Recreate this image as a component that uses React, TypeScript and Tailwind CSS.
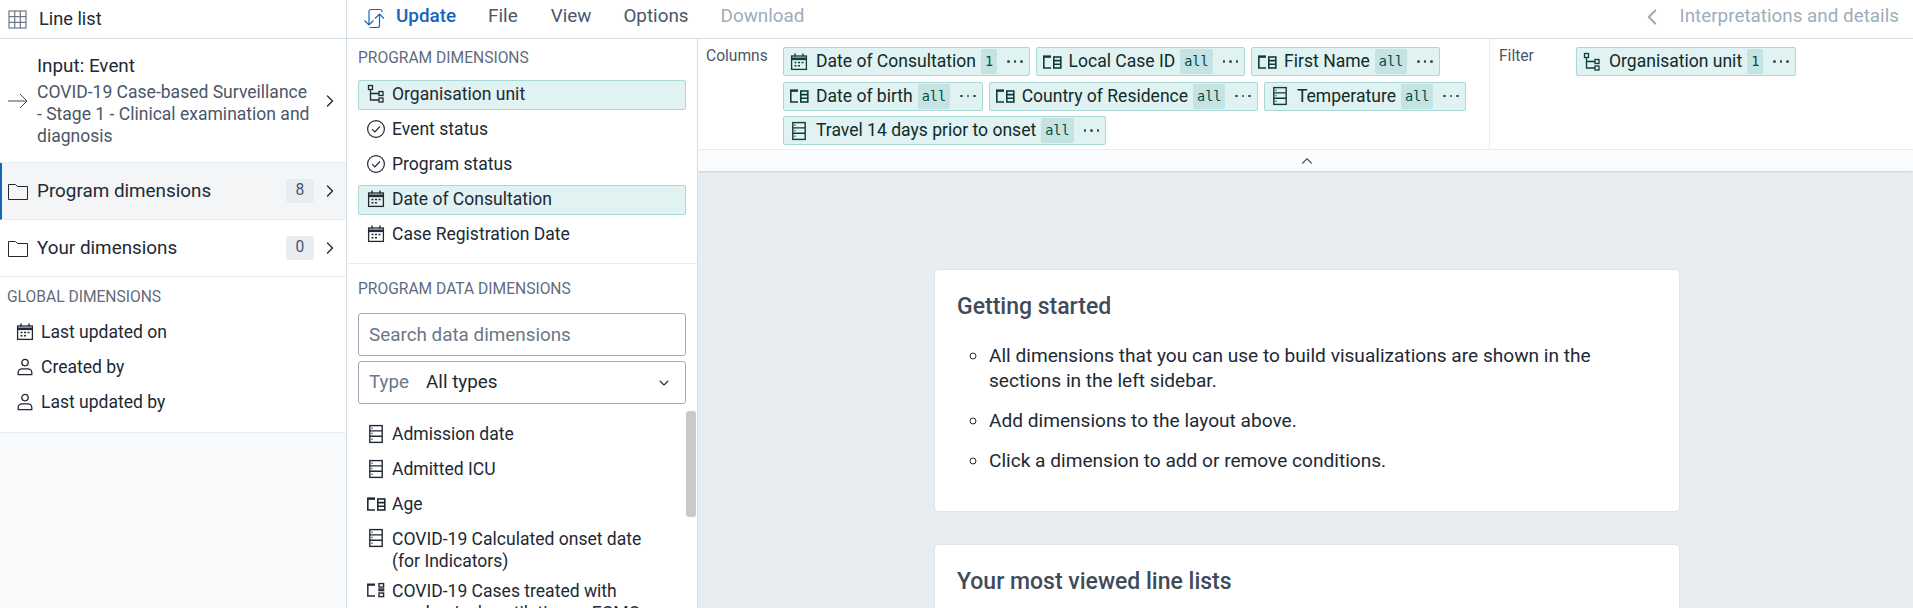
import React from 'react';
import { ChevronDown, ChevronLeft, ChevronRight, ChevronUp } from 'lucide-react';

type IconKind = 'org' | 'check' | 'calendar' | 'data' | 'attr' | 'indicator' | 'user';

const DimIcon = ({ kind, color = '#212934' }: { kind: IconKind; color?: string }) => {
  const common = { fill: 'none', stroke: color, strokeWidth: 1 };
  if (kind === 'org')
    return (
      <svg width="20" height="20" viewBox="0 0 20 20" {...common} strokeWidth={1.3}>
        <rect x="2.5" y="1.5" width="4" height="4" />
        <rect x="13" y="7.5" width="4" height="4" />
        <rect x="13" y="14" width="4" height="4" />
        <path d="M4.5 5.5V16H13M4.5 9.5H13" />
      </svg>
    );
  if (kind === 'check')
    return (
      <svg width="20" height="20" viewBox="0 0 20 20" {...common} strokeWidth={1.2}>
        <circle cx="10" cy="10" r="8.4" />
        <path d="M6 10.2l2.8 2.8L14 7.5" />
      </svg>
    );
  if (kind === 'calendar')
    return (
      <svg width="20" height="20" viewBox="0 0 20 20" {...common} strokeWidth={1.3}>
        <rect x="2.6" y="4" width="14.8" height="13.4" />
        <path d="M2.6 6.8h14.8" strokeWidth={2.6} />
        <path d="M6 1.6v3M14 1.6v3" strokeWidth={1.4} />
        <path d="M5.5 10.5h2M9 10.5h2M12.5 10.5h2M5.5 13.8h2M9 13.8h2" strokeWidth={1.6} />
      </svg>
    );
  if (kind === 'data')
    return (
      <svg width="20" height="20" viewBox="0 0 20 20" {...common} strokeWidth={1.4}>
        <rect x="3.8" y="1.6" width="12.4" height="16.8" />
        <path d="M3.8 6.9h12.4M3.8 12.2h12.4" />
        <path d="M5.5 4.3h1M5.5 9.5h1M5.5 15.3h1" />
      </svg>
    );
  if (kind === 'attr')
    return (
      <svg width="20" height="20" viewBox="0 0 20 20" {...common} strokeWidth={1.6}>
        <path d="M9 16H1.8V4.6H9" />
        <path d="M1 4.6h8" strokeWidth={2.2} />
        <rect x="11.8" y="5" width="7" height="11" />
        <path d="M11.8 8.6h7M11.8 12.3h7" />
      </svg>
    );
  if (kind === 'indicator')
    return (
      <svg width="20" height="20" viewBox="0 0 20 20" {...common} strokeWidth={1.4}>
        <path d="M9 16H1.8V4.6H9" />
        <path d="M1 4.6h8" strokeWidth={2.2} />
        <rect x="13" y="3.6" width="4.6" height="3.4" />
        <rect x="13" y="9" width="4.6" height="1.6" />
        <rect x="13" y="13" width="4.6" height="3.6" />
      </svg>
    );
  return (
    <svg width="20" height="20" viewBox="0 0 20 20" {...common} strokeWidth={1.3}>
      <circle cx="10" cy="5.6" r="3.2" />
      <path d="M3.2 17.6v-2.2c0-2.2 2-3.6 3.8-3.6h6c1.8 0 3.8 1.4 3.8 3.6v2.2z" />
    </svg>
  );
};

const FolderIcon = () => (
  <svg width="20" height="17" viewBox="0 0 20 17" fill="none" stroke="#212934" strokeWidth="1" className="shrink-0">
    <path d="M.5 1.5h7l2 2h10v13H.5z" />
  </svg>
);

const Chip = ({ kind, label, badge }: { kind: IconKind; label: string; badge: string }) => (
  <div className="flex h-[29px] items-center rounded-[2px] border border-[#a8d9d6] bg-[#e0f2f1] pl-[5px] pr-[6px] text-[17.55px] text-[#0f2b2a]">
    <span className="flex w-[20px] shrink-0 justify-center">
      <DimIcon kind={kind} color="#0f3d39" />
    </span>
    <span className="ml-[7px] whitespace-nowrap">{label}</span>
    <span className="ml-[5px] flex h-[25px] items-center rounded-[2px] bg-[#c5e3e2] px-[4px] font-['DejaVu_Sans_Mono',monospace] text-[13.5px] text-[#004d40]">
      {badge}
    </span>
    <span className="ml-[10px] flex gap-[4px]">
      <i className="h-[2.5px] w-[2.5px] rounded-full bg-[#33524f]" />
      <i className="h-[2.5px] w-[2.5px] rounded-full bg-[#33524f]" />
      <i className="h-[2.5px] w-[2.5px] rounded-full bg-[#33524f]" />
    </span>
  </div>
);

const PanelRow = ({ kind, label, selected }: { kind: IconKind; label: string; selected?: boolean }) => (
  <div
    className={`flex h-[30px] items-center rounded-[2px] border pb-[2px] pl-[7px] text-[17.55px] text-[#212934] ${
      selected ? 'border-[#a8d9d6] bg-[#e0f2f1]' : 'border-transparent'
    }`}
  >
    <span className="flex w-[20px] shrink-0 justify-center">
      <DimIcon kind={kind} />
    </span>
    <span className="ml-[6px]">{label}</span>
  </div>
);

const SideRow = ({ label, count, active }: { label: string; count: number; active?: boolean }) => (
  <div
    className={`flex h-[57px] items-center border-b border-[#e8edf2] pr-[6px] ${
      active ? 'border-l-2 border-l-[#1565c0] bg-[#f3f5f7] pl-[6px]' : 'pl-[8px]'
    }`}
  >
    <FolderIcon />
    <span className="ml-[9px] flex-1 pt-[1px] text-[18.85px] text-[#212934]">{label}</span>
    <span className="flex h-[24px] w-[28px] items-center justify-center rounded-[3px] bg-[#e8edf2] text-[15.6px] text-[#4a5768]">
      {count}
    </span>
    <ChevronRight size={20} strokeWidth={1.6} className="ml-[6px] text-[#212934]" />
  </div>
);

export default function App() {
  return (
    <div className="flex h-[608px] flex-col overflow-hidden bg-white font-['Roboto',sans-serif]">
      <header className="flex h-[39px] shrink-0 border-b border-[#d5dde5]">
        <div className="flex w-[347px] shrink-0 items-center border-r border-[#d5dde5] pl-[8px]">
          <svg width="19" height="19" viewBox="0 0 19 19" fill="none" stroke="#6c7787" strokeWidth="1.2">
            <rect x="1" y="1" width="17" height="17" />
            <path d="M1 6.7h17M1 12.3h17M6.7 1v17M12.3 1v17" />
          </svg>
          <span className="ml-[12px] text-[18.2px] text-[#212934]">Line list</span>
        </div>
        <nav className="flex flex-1 items-center pb-[5px] text-[18.85px] text-[#4a5768]">
          <svg className="ml-[16px] mt-[3px]" width="23" height="21" viewBox="0 0 23 21" fill="none" stroke="#1565c0" strokeWidth="1.2">
            <path d="M6 12V3.5a2 2 0 0 1 2-2h9a2 2 0 0 1 2 2V4M1.5 12.5L6 17l4.5-4.5M6 17V6" />
            <path d="M16.5 7v10.5a2 2 0 0 1-2 2H6.5M12 10.5L16.5 6l4.5 4.5" />
          </svg>
          <span className="ml-[10px] font-medium text-[#1565c0]">Update</span>
          <span className="ml-[32px]">File</span>
          <span className="ml-[33px]">View</span>
          <span className="ml-[32px]">Options</span>
          <span className="ml-[32px] text-[#a0adba]">Download</span>
          <ChevronLeft size={26} strokeWidth={2} className="ml-auto text-[#a0adba]" />
          <span className="ml-[15px] mr-[14px] text-[#a0adba]">Interpretations and details</span>
        </nav>
      </header>

      <div className="flex min-h-0 flex-1">
        <aside className="flex w-[347px] shrink-0 flex-col border-r border-[#d5dde5] bg-[#f8f9fa]">
          <div className="bg-white">
            <div className="flex h-[124px] items-center border-b border-[#e8edf2] pl-[8px] pr-[6px]">
              <svg width="20" height="18" viewBox="0 0 20 18" fill="none" stroke="#404b5a" strokeWidth="1" className="shrink-0">
                <path d="M0 9h19M12 2l7 7-7 7" />
              </svg>
              <div className="ml-[9px] flex-1">
                <div className="mb-[4px] text-[18.85px] leading-[22px] text-[#212934]">Input: Event</div>
                <div className="text-[17.55px] leading-[22px] text-[#4a5768]">
                  COVID-19 Case-based Surveillance - Stage 1 - Clinical examination and diagnosis
                </div>
              </div>
              <ChevronRight size={20} strokeWidth={1.6} className="ml-[6px] shrink-0 text-[#212934]" />
            </div>
            <SideRow label="Program dimensions" count={8} active />
            <SideRow label="Your dimensions" count={0} />
            <div className="border-b border-[#e8edf2] pb-[14px]">
              <div className="px-[7px] pb-[13px] pt-[12px] text-[15.6px] uppercase leading-[16px] text-[#5f6c7c]">
                Global dimensions
              </div>
              <div className="flex flex-col gap-[5px] pl-[7px]">
                <PanelRow kind="calendar" label="Last updated on" />
                <PanelRow kind="user" label="Created by" />
                <PanelRow kind="user" label="Last updated by" />
              </div>
            </div>
          </div>
        </aside>

        <section className="relative w-[351px] shrink-0 overflow-hidden border-r border-[#d5dde5]">
          <div className="border-b border-[#e8edf2] px-[11px] pb-[13px]">
            <div className="pb-[13px] pt-[10px] text-[15.6px] uppercase leading-[18px] text-[#5f6c7c]">Program dimensions</div>
            <div className="flex flex-col gap-[5px]">
              <PanelRow kind="org" label="Organisation unit" selected />
              <PanelRow kind="check" label="Event status" />
              <PanelRow kind="check" label="Program status" />
              <PanelRow kind="calendar" label="Date of Consultation" selected />
              <PanelRow kind="calendar" label="Case Registration Date" />
            </div>
          </div>
          <div className="px-[11px]">
            <div className="pb-[15px] pt-[16px] text-[15.6px] uppercase leading-[18px] text-[#5f6c7c]">Program data dimensions</div>
            <input
              className="h-[43px] w-full rounded-[3px] border border-[#a0adba] px-[10px] text-[18.85px] placeholder:text-[#6c7787]"
              placeholder="Search data dimensions"
            />
            <div className="mt-[5px] flex h-[43px] items-center rounded-[3px] border border-[#a0adba] pl-[10px] pr-[13px] text-[18.85px]">
              <span className="text-[#6c7787]">Type</span>
              <span className="ml-[17px] flex-1 text-[#212934]">All types</span>
              <ChevronDown size={16} strokeWidth={1.6} className="text-[#212934]" />
            </div>
            <div className="mt-[16px] flex flex-col gap-[5px] pr-[11px]">
              <PanelRow kind="data" label="Admission date" />
              <PanelRow kind="data" label="Admitted ICU" />
              <PanelRow kind="attr" label="Age" />
              <div className="mt-[3px] flex items-start pl-[8px] text-[17.55px] leading-[22px] text-[#212934]">
                <span className="flex w-[20px] shrink-0 justify-center"><DimIcon kind="data" /></span>
                <span className="ml-[6px]">COVID-19 Calculated onset date<br />(for Indicators)</span>
              </div>
              <div className="mt-[3px] flex items-start pl-[8px] text-[17.55px] leading-[22px] text-[#212934]">
                <span className="flex w-[20px] shrink-0 justify-center"><DimIcon kind="indicator" /></span>
                <span className="ml-[6px]">COVID-19 Cases treated with<br />mechanical ventilation or ECMO</span>
              </div>
            </div>
          </div>
          {/* scrollbar thumb */}
          <div className="absolute right-[1px] top-[372px] h-[106px] w-[10px] rounded-[3px] bg-[#c9c9c9]" />
        </section>

        <main className="flex min-w-0 flex-1 flex-col bg-[#e8edf2]">
          <div className="flex h-[111px] shrink-0 border-b border-[#e8edf2] bg-white">
            <div className="flex w-[792px] shrink-0 border-r border-[#e8edf2]">
              <div className="w-[85px] shrink-0 pl-[8px] pt-[6px] text-[15.6px] text-[#4a5768]">Columns</div>
              <div className="flex flex-wrap content-start gap-x-[6px] gap-y-[5.5px] pt-[8px]">
                <Chip kind="calendar" label="Date of Consultation" badge="1" />
                <Chip kind="attr" label="Local Case ID" badge="all" />
                <Chip kind="attr" label="First Name" badge="all" />
                <Chip kind="attr" label="Date of birth" badge="all" />
                <Chip kind="attr" label="Country of Residence" badge="all" />
                <Chip kind="data" label="Temperature" badge="all" />
                <Chip kind="data" label="Travel 14 days prior to onset" badge="all" />
              </div>
            </div>
            <div className="flex flex-1">
              <div className="w-[86px] shrink-0 pl-[9px] pt-[6px] text-[15.6px] text-[#4a5768]">Filter</div>
              <div className="pt-[8px]">
                <Chip kind="org" label="Organisation unit" badge="1" />
              </div>
            </div>
          </div>
          <div className="flex h-[21px] shrink-0 items-center justify-center bg-[#fbfcfd] pl-[2px] shadow-[0_1px_2px_rgba(33,41,52,0.15)]">
            <ChevronUp size={18} strokeWidth={1.5} className="text-[#4a5768]" />
          </div>
          <div className="flex flex-col items-center gap-[32px] pl-[3px] pt-[98px]">
            <div className="h-[243px] w-[746px] shrink-0 rounded-[4px] border border-[#dfe5eb] bg-white px-[22px] pt-[22px]">
              <h2 className="text-[23px] font-medium leading-[30px] text-[#404b5a]">Getting started</h2>
              <ul className="ml-[32px] mt-[21px] list-[circle] text-[19.1px] leading-[25px] text-[#212934]">
                <li className="mb-[15px]">All dimensions that you can use to build visualizations are shown in the sections in the left sidebar.</li>
                <li className="mb-[15px]">Add dimensions to the layout above.</li>
                <li>Click a dimension to add or remove conditions.</li>
              </ul>
            </div>
            <div className="h-[120px] w-[746px] shrink-0 rounded-[4px] border border-[#dfe5eb] bg-white px-[22px] pt-[22px]">
              <h2 className="text-[23px] font-medium leading-[30px] text-[#404b5a]">Your most viewed line lists</h2>
            </div>
          </div>
        </main>
      </div>
    </div>
  );
}
